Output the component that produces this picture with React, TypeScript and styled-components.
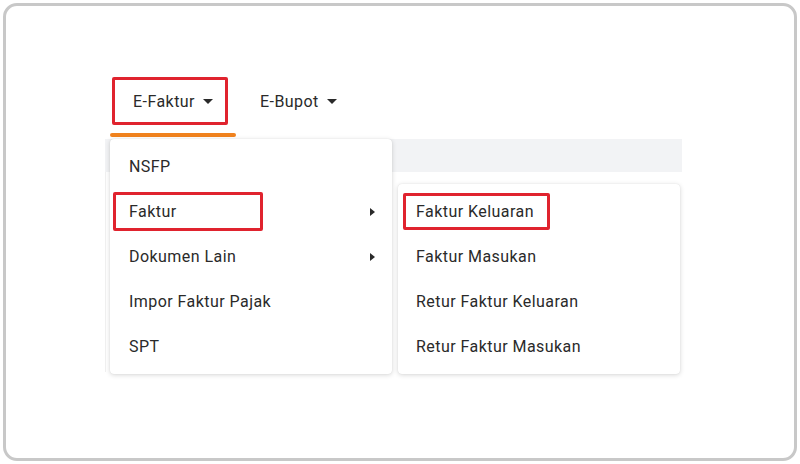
import React from 'react';
import styled, { createGlobalStyle } from 'styled-components';

const GlobalStyle = createGlobalStyle`
  html, body {
    margin: 0;
    padding: 0;
    background: #ffffff;
  }
  body {
    font-family: Roboto, "Noto Sans", "Liberation Sans", sans-serif;
    color: #2a2a2a;
  }
`;

const Frame = styled.div`
  box-sizing: border-box;
  margin: 3px;
  height: 458px;
  border: 3px solid #c8c8c8;
  border-radius: 14px;
  background: #ffffff;
  padding: 71px 0 0 99px;
`;

const Workspace = styled.div`
  position: relative;
  width: 577px;
`;

const NavBar = styled.nav`
  display: flex;
  align-items: flex-start;
  margin-left: 5px;
`;

const NavItem = styled.div<{ $active?: boolean }>`
  display: flex;
  flex-direction: column;
  align-items: flex-start;
  width: ${p => (p.$active ? '126px' : 'auto')};
`;

const NavLabel = styled.div<{ $marked?: boolean }>`
  box-sizing: border-box;
  display: flex;
  align-items: center;
  gap: 8px;
  height: 48px;
  width: ${p => (p.$marked ? '116px' : 'auto')};
  margin-left: ${p => (p.$marked ? '2px' : '21px')};
  padding-left: ${p => (p.$marked ? '18px' : '0')};
  border: ${p => (p.$marked ? '3px solid #e0232e' : '3px solid transparent')};
  border-radius: 2px;
  font-size: 16px;
  letter-spacing: 0.45px;
`;

const Underline = styled.div`
  width: 126px;
  height: 4px;
  margin-top: 8px;
  border-radius: 2px;
  background: #f0821e;
`;

const Caret = styled.span`
  width: 0;
  height: 0;
  border-left: 5px solid transparent;
  border-right: 5px solid transparent;
  border-top: 5px solid #2a2a2a;
`;

const TableHead = styled.div`
  margin-top: 2px;
  height: 33px;
  background: #f2f3f5;
`;

const TableBody = styled.div`
  height: 200px;
  border-left: 1px solid #f0f0f0;
`;

const Menu = styled.ul<{ $sub?: boolean }>`
  position: absolute;
  top: ${p => (p.$sub ? '-5px' : '62px')};
  left: ${p => (p.$sub ? 'calc(100% + 6px)' : '5px')};
  box-sizing: border-box;
  width: 282px;
  margin: 0;
  padding: 5px 0;
  list-style: none;
  background: #ffffff;
  border-radius: 4px;
  box-shadow: 0 1px 5px rgba(0, 0, 0, 0.16), 0 0 1px rgba(0, 0, 0, 0.12);
  z-index: ${p => (p.$sub ? 3 : 2)};
`;

const MenuItem = styled.li<{ $sub?: boolean }>`
  position: relative;
  display: flex;
  align-items: center;
  justify-content: space-between;
  height: 45px;
  padding: 0 17px 0 ${p => (p.$sub ? '18px' : '19px')};
  font-size: 16px;
  letter-spacing: 0.45px;
  cursor: default;
`;

const SubCaret = styled.span`
  width: 0;
  height: 0;
  border-top: 4px solid transparent;
  border-bottom: 4px solid transparent;
  border-left: 5px solid #2a2a2a;
`;

const Marker = styled.span<{ $left: number; $width: number; $inset: number }>`
  position: absolute;
  top: ${p => p.$inset}px;
  bottom: ${p => p.$inset}px;
  left: ${p => p.$left}px;
  width: ${p => p.$width}px;
  box-sizing: border-box;
  border: 3px solid #e0232e;
  border-radius: 2px;
  pointer-events: none;
`;

const mainItems = ['NSFP', 'Faktur', 'Dokumen Lain', 'Impor Faktur Pajak', 'SPT'];
const withSub = ['Faktur', 'Dokumen Lain'];
const fakturItems = ['Faktur Keluaran', 'Faktur Masukan', 'Retur Faktur Keluaran', 'Retur Faktur Masukan'];

const App: React.FC = () => {
  return (
    <>
      <GlobalStyle />
      <Frame>
        <Workspace>
          <NavBar>
            <NavItem $active>
              <NavLabel $marked>
                E-Faktur <Caret />
              </NavLabel>
              <Underline />
            </NavItem>
            <NavItem>
              <NavLabel>
                E-Bupot <Caret />
              </NavLabel>
            </NavItem>
          </NavBar>
          <TableHead />
          <TableBody />

          <Menu>
            {mainItems.map(item => (
              <MenuItem key={item}>
                <span>{item}</span>
                {withSub.includes(item) && <SubCaret />}
                {item === 'Faktur' && (
                  <>
                    <Marker $left={3} $width={150} $inset={3} />
                    <Menu $sub>
                      {fakturItems.map(sub => (
                        <MenuItem key={sub} $sub>
                          <span>{sub}</span>
                          {sub === 'Faktur Keluaran' && <Marker $left={5} $width={147} $inset={4} />}
                        </MenuItem>
                      ))}
                    </Menu>
                  </>
                )}
              </MenuItem>
            ))}
          </Menu>
        </Workspace>
      </Frame>
    </>
  );
};

export default App;
